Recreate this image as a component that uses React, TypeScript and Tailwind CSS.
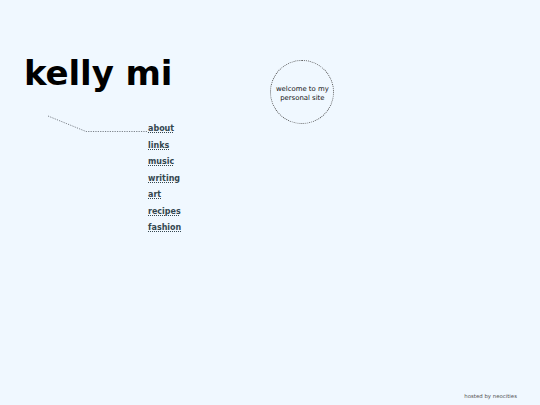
import React from "react";

const links = ["about", "links", "music", "writing", "art", "recipes", "fashion"];

export default function App() {
  return (
    <div className="relative min-h-[405px] w-[540px] bg-[#f0f8ff] font-['DejaVu_Sans',sans-serif] text-black flex flex-col">
      <div className="flex items-start pt-[60px]">
        <h1 className="ml-[24px] mt-[-7px] text-[34px] font-bold leading-[40px] tracking-[-0.1px]">kelly mi</h1>
        <div className="ml-[98px] flex h-[64px] w-[64px] items-center justify-center rounded-full border border-dotted border-[#555] pt-[3px] text-center text-[6.9px] leading-[9px] text-[#111]">
          <span>welcome to my<br />personal site</span>
        </div>
      </div>
      <div className="relative">
        <svg className="absolute left-0 top-[-10px]" width="160" height="30" viewBox="0 0 160 30">
          <polyline points="48,2 86,17.5 147,17.5" fill="none" stroke="#7a8088" strokeWidth="1" strokeDasharray="1.2 1.2" />
        </svg>
      </div>
      <nav className="ml-[148px] mt-[-3px] flex flex-col">
        {links.map((l) => (
          <a key={l} href="#" className="block h-[16.5px] text-[8px] font-bold leading-[16.5px] text-[#34474f] underline decoration-dotted decoration-[#34474f] underline-offset-[1px]">
            {l}
          </a>
        ))}
      </nav>
      <div className="flex-1" />
      <footer className="flex justify-end pb-[5px] pr-[23px] text-[5.4px] leading-[7px] text-[#555]">hosted by neocities</footer>
    </div>
  );
}
